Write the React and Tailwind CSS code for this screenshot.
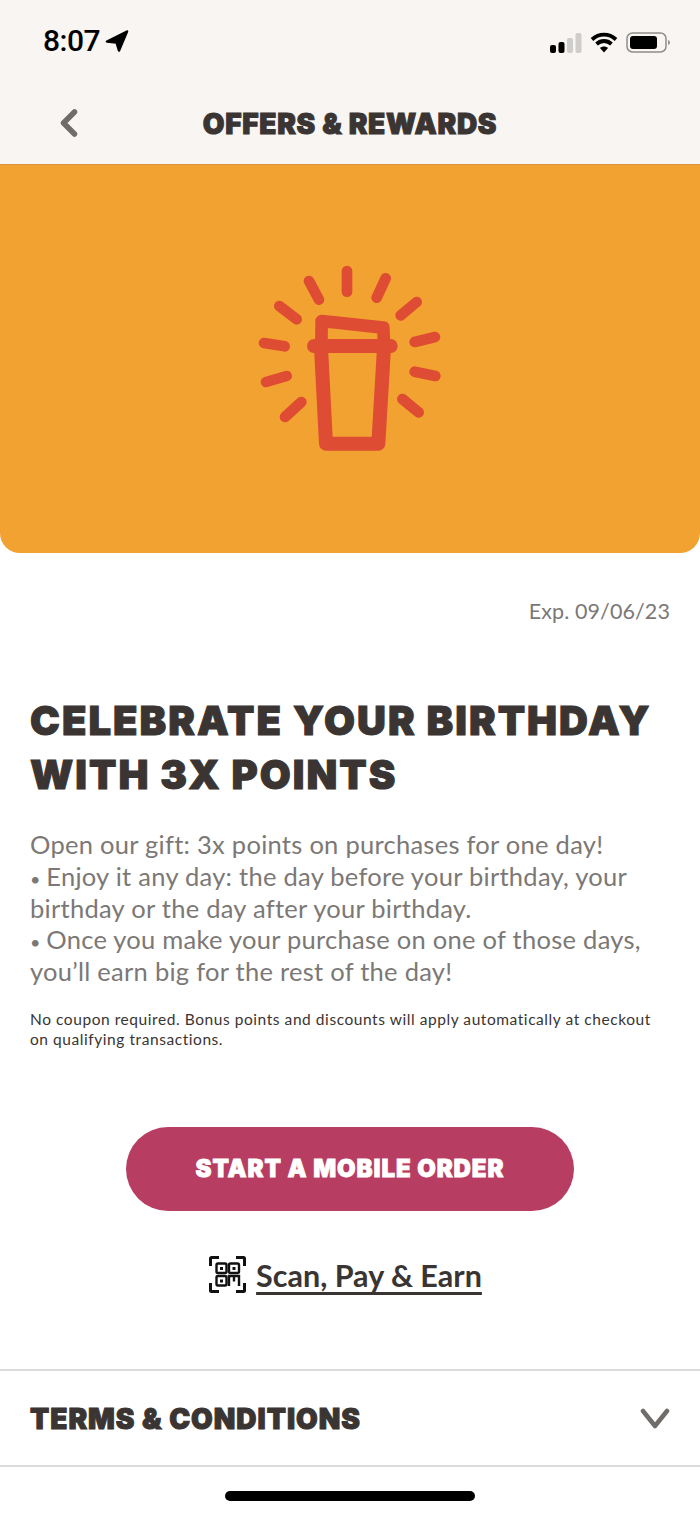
const DISPLAY = "font-['Inter',sans-serif] font-black";

function StatusBar() {
  return (
    <div className="h-[82px] flex items-start justify-between pt-[25px] pl-[43px] pr-[29px]">
      <div className="flex items-center gap-[5px]">
        <span className="font-['Roboto',sans-serif] font-medium text-[30px] leading-[32px] tracking-[-0.5px] text-black">8:07</span>
        <svg width="24" height="22" viewBox="0 0 24 22" fill="#000">
          <path d="M22 1.500 2 11.500l9.500 1L14 20.500z" stroke="#000" strokeWidth="2.500" strokeLinejoin="round" />
        </svg>
      </div>
      <div className="flex items-center pt-[7px]">
        <svg width="32" height="20" viewBox="0 0 32 20">
          <rect x="0" y="12" width="6" height="8" rx="2" fill="#000" />
          <rect x="8.500" y="9" width="6" height="11" rx="2" fill="#000" />
          <rect x="17" y="5" width="6" height="15" rx="2" fill="#cfcdcb" />
          <rect x="25.500" y="0" width="6" height="20" rx="2" fill="#cfcdcb" />
        </svg>
        <svg width="28" height="21" viewBox="0 0 28 21" fill="none" stroke="#000" strokeWidth="3.800" className="ml-[8px]">
          <path d="M2 7.500C9 1 19 1 26 7.500" />
          <path d="M6.500 12C11 8 17 8 21.500 12" />
          <path d="M14 20.500 10 16c2.200-2 5.800-2 8 0z" fill="#000" stroke="none" />
        </svg>
        <svg width="45" height="21" viewBox="0 0 45 21" fill="none" className="ml-[8px]">
          <rect x="1" y="1" width="39" height="19" rx="5.500" stroke="#8f8d8b" strokeWidth="1.500" />
          <rect x="4" y="4" width="27" height="13" rx="3" fill="#000" />
          <path d="M42 8c1.500.5 2 1.400 2 2.500s-.5 2-2 2.500z" fill="#9a9896" />
        </svg>
      </div>
    </div>
  );
}

function NavBar() {
  return (
    <div className="h-[82px] grid grid-cols-[1fr_auto_1fr] items-center">
      <div className="pl-[60px] pb-[1px]">
        <svg width="18" height="28" viewBox="0 0 18 28" fill="none" stroke="#6f6c69" strokeWidth="5.500" strokeLinecap="round" strokeLinejoin="round">
          <path d="M14.500 3 3.500 14l11 11" />
        </svg>
      </div>
      <h1 className={`${DISPLAY} text-[28px] leading-[34px] tracking-[0.7px] text-[#3a3432] [-webkit-text-stroke:1px_#3a3432] pt-[1px]`}>
        OFFERS &amp; REWARDS
      </h1>
      <div />
    </div>
  );
}

function CupIcon() {
  const rays = [
    [321, 60, 321, 122],
    [207, 90, 237, 146],
    [437, 82, 410, 140],
    [118, 165, 170, 205],
    [530, 153, 482, 193],
    [72, 276, 134, 286],
    [585, 258, 524, 273],
    [78, 393, 140, 375],
    [586, 375, 524, 362],
    [135, 498, 184, 453],
    [536, 484, 487, 444],
  ];
  return (
    <svg width="220" height="210" viewBox="0 0 660 630" fill="none" stroke="#dd4c33" strokeLinecap="round" strokeLinejoin="round">
      {rays.map((r, i) => (
        <line key={i} x1={r[0]} y1={r[1]} x2={r[2]} y2={r[3]} strokeWidth="32" />
      ))}
      <path d="M245 210 430 230 432 285H244Z" strokeWidth="38" />
      <path d="M222 285H452" strokeWidth="42" />
      <path d="M243 290 258 578H415L432 290" strokeWidth="42" />
    </svg>
  );
}

function QrIcon() {
  return (
    <svg width="37" height="37" viewBox="0 0 37 37" fill="none" stroke="#111" strokeWidth="2.400">
      <path d="M1.500 10V2.500a1 1 0 0 1 1-1H10M27 1.500h7.500a1 1 0 0 1 1 1V10M1.500 27v7.500a1 1 0 0 0 1 1H10M27 35.500h7.500a1 1 0 0 0 1-1V27" strokeWidth="3" />
      <rect x="7.500" y="7.500" width="10" height="9.500" rx="1.500" />
      <rect x="20" y="7.500" width="10" height="9.500" rx="1.500" />
      <rect x="7.500" y="20" width="10" height="9.500" rx="1.500" />
      <path d="M20 30v-10h5v5.500M30 30v-10h-5" />
      <rect x="11" y="11" width="3" height="3" fill="#111" stroke="none" />
      <rect x="23.500" y="11" width="3" height="3" fill="#111" stroke="none" />
      <rect x="11" y="23.500" width="3" height="3" fill="#111" stroke="none" />
    </svg>
  );
}

export default function App() {
  return (
    <div className="w-[700px] h-[1516px] bg-white overflow-hidden font-['Lato',sans-serif] flex flex-col">
      <header className="bg-[#f8f5f2] h-[164px] shrink-0">
        <StatusBar />
        <NavBar />
      </header>
      <div className="h-[389px] shrink-0 bg-[#f2a230] border-t border-[#d6953a] rounded-b-[20px] flex items-center justify-center pb-[7px]">
        <CupIcon />
      </div>

      <p className="mt-[44px] pr-[30px] text-right text-[21.500px] leading-[28px] tracking-[0.1px] text-[#7b7876]">Exp. 09/06/23</p>

      <div className="px-[30px] mt-[69px]">
        <h2 className={`${DISPLAY} text-[40px] leading-[54px] tracking-[2px] whitespace-nowrap text-[#3a3432] [-webkit-text-stroke:1px_#3a3432]`}>
          CELEBRATE YOUR BIRTHDAY
          <br />
          WITH 3X POINTS
        </h2>
        <p className="mt-[27px] text-[25.500px] leading-[31.800px] tracking-[0.27px] text-[#7b7876]">
          Open our gift: 3x points on purchases for one day!
          <br /><span className="text-[18px] leading-none tracking-[-1px]">•</span> Enjoy it any day: the day before your birthday, your
          <br />birthday or the day after your birthday.
          <br /><span className="text-[18px] leading-none tracking-[-1px]">•</span> Once you make your purchase on one of those days,
          <br />you’ll earn big for the rest of the day!
        </p>
        <p className="mt-[21px] text-[15.500px] leading-[20px] tracking-[0.56px] whitespace-nowrap text-[#3a3432]">
          No coupon required. Bonus points and discounts will apply automatically at checkout
          <br />on qualifying transactions.
        </p>
      </div>

      <div className="mt-[78px] flex justify-center">
        <button className={`${DISPLAY} w-[448px] h-[84px] rounded-full bg-[#b83d62] text-white text-[24px] tracking-[0.9px] [-webkit-text-stroke:0.8px_#fff]`}>
          START A MOBILE ORDER
        </button>
      </div>

      <div className="mt-[45px] flex items-center justify-center gap-[10px] pr-[9px]">
        <QrIcon />
        <a className="font-bold text-[30.500px] leading-[38px] text-[#3a3432] underline decoration-[2.500px] underline-offset-[5px]">
          Scan, Pay &amp; Earn
        </a>
      </div>

      <div className="mt-[75px] h-[98px] border-y-2 border-[#dcdbd9] flex items-center justify-between pt-[2px] pl-[30px] pr-[30px]">
        <span className={`${DISPLAY} text-[28px] tracking-[1px] text-[#3a3432] [-webkit-text-stroke:1px_#3a3432]`}>
          TERMS &amp; CONDITIONS
        </span>
        <svg width="30" height="22" viewBox="0 0 30 22" fill="none" stroke="#6f6c69" strokeWidth="4.500" strokeLinecap="round" strokeLinejoin="round">
          <path d="M3 3 15 18 27 3" />
        </svg>
      </div>

      <div className="mt-[24px] self-center w-[250px] h-[10px] rounded-full bg-black" />
    </div>
  );
}
